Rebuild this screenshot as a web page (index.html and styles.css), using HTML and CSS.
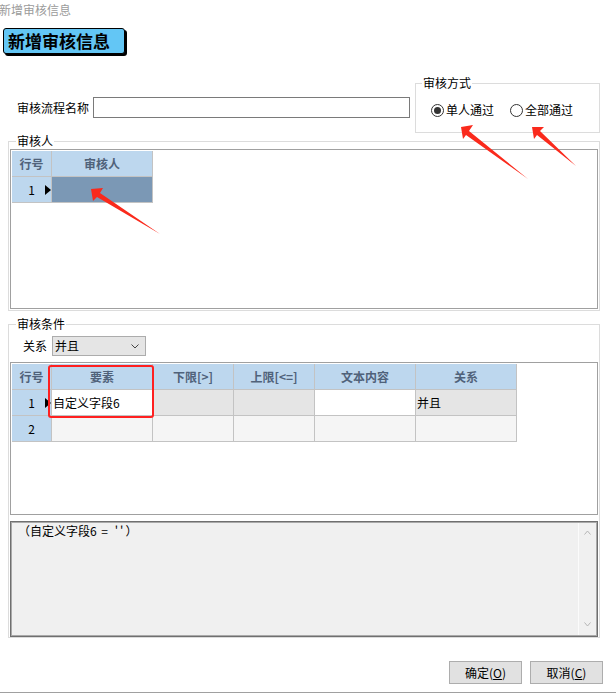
FILE: index.html
```html
<!DOCTYPE html>
<html lang="zh-CN">
<head>
    <meta charset="UTF-8">
    <title>新增审核信息</title>
    <link rel="stylesheet" href="styles.css">
</head>
<body>
    <div class="window">
        <div class="titlebar">新增审核信息</div>
        <div class="banner">新增审核信息</div>

        <div class="top-row">
            <div class="name-field">
                <label for="flowName">审核流程名称</label>
                <input type="text" id="flowName" class="text-input">
            </div>
            <fieldset class="group mode-group">
                <legend>审核方式</legend>
                <div class="radios">
                    <span class="radio"><i class="radio-dot checked"></i>单人通过</span>
                    <span class="radio"><i class="radio-dot"></i>全部通过</span>
                </div>
            </fieldset>
        </div>

        <fieldset class="group reviewer-group">
            <legend>审核人</legend>
            <div class="grid-box reviewer-grid">
                <div class="grid-row header">
                    <div class="cell rowhead">行号</div>
                    <div class="cell col-wide">审核人</div>
                </div>
                <div class="grid-row">
                    <div class="cell rowhead num"><span>1</span><i class="pointer"></i></div>
                    <div class="cell col-wide selected"></div>
                </div>
            </div>
        </fieldset>

        <fieldset class="group cond-group">
            <legend>审核条件</legend>
            <div class="cond-body">
                <div class="relation-row">
                    <label>关系</label>
                    <div class="dropdown">
                        <span>并且</span>
                        <svg width="8" height="5" viewBox="0 0 8 5"><polyline points="0.5,0.5 4,4 7.5,0.5" fill="none" stroke="#444" stroke-width="1"/></svg>
                    </div>
                </div>

                <div class="grid-box cond-grid">
                    <div class="grid-row header">
                        <div class="cell rowhead">行号</div>
                        <div class="cell col-wide">要素</div>
                        <div class="cell col-mid">下限[&gt;]</div>
                        <div class="cell col-mid">上限[&lt;=]</div>
                        <div class="cell col-wide">文本内容</div>
                        <div class="cell col-wide">关系</div>
                    </div>
                    <div class="grid-row">
                        <div class="cell rowhead num"><span>1</span><i class="pointer"></i></div>
                        <div class="cell col-wide value white">自定义字段6</div>
                        <div class="cell col-mid value"></div>
                        <div class="cell col-mid value"></div>
                        <div class="cell col-wide value white"></div>
                        <div class="cell col-wide value">并且</div>
                    </div>
                    <div class="grid-row">
                        <div class="cell rowhead num"><span>2</span></div>
                        <div class="cell col-wide value light"></div>
                        <div class="cell col-mid value light"></div>
                        <div class="cell col-mid value light"></div>
                        <div class="cell col-wide value light"></div>
                        <div class="cell col-wide value light"></div>
                    </div>
                    <div class="highlight"></div>
                </div>

                <div class="expr-box">
                    <div class="expr-text">（自定义字段6<span class="expr-op"> = ''</span>）</div>
                    <div class="scrollbar">
                        <svg width="7" height="5" viewBox="0 0 7 5"><polyline points="0.5,4.5 3.5,1 6.5,4.5" fill="none" stroke="#b5b5b5" stroke-width="1"/></svg>
                        <svg width="7" height="5" viewBox="0 0 7 5"><polyline points="0.5,0.5 3.5,4 6.5,0.5" fill="none" stroke="#b5b5b5" stroke-width="1"/></svg>
                    </div>
                </div>
            </div>
        </fieldset>

        <div class="buttons">
            <button>确定(<u>O</u>)</button>
            <button>取消(<u>C</u>)</button>
        </div>
        <div class="window-bottom"></div>

        <!-- annotation arrows -->
        <svg class="arrows" width="616" height="693" viewBox="0 0 616 693">
            <polygon points="91,189 103,188 100,193 160,234 97,197 93,201" fill="#fa2a1c"/>
            <polygon points="461,127 473,125 469,131 528,179 466,135 463,139" fill="#fa2a1c"/>
            <polygon points="532,127 544,127 540,131 576,166 537,135 534,139" fill="#fa2a1c"/>
        </svg>
    </div>
</body>
</html>
```

FILE: styles.css
```css
html, body {
    margin: 0;
    padding: 0;
    background-color: white;
    overflow: hidden;
}

.window {
    position: relative;
    width: 616px;
    height: 693px;
    font-family: 'Noto Sans CJK SC', 'Noto Sans', sans-serif;
    font-size: 12px;
    line-height: 14px;
    color: #000;
}

.titlebar {
    height: 20px;
    line-height: 20px;
    color: #9b9b9b;
    margin-left: -1px;
}

.banner {
    box-sizing: border-box;
    width: 122px;
    height: 26px;
    margin: 8px 0 0 3px;
    padding-left: 4px;
    background-color: #63c6f5;
    border: 1px solid #000;
    border-radius: 3px;
    box-shadow: 2px 2px 0 #000;
    font-size: 17px;
    font-weight: bold;
    line-height: 24px;
}

.top-row {
    display: flex;
    align-items: flex-start;
    margin-top: 22px;
}

.name-field {
    display: flex;
    align-items: center;
    margin: 21px 0 0 17px;
}

.name-field label {
    margin-right: 4px;
}

.text-input {
    box-sizing: border-box;
    width: 317px;
    height: 21px;
    border: 1px solid #7a7a7a;
    padding: 0 2px;
    margin: 0;
    outline: none;
}

/* group boxes */
.group {
    margin: 0;
    padding: 0;
    min-width: 0;
    border: 1px solid #dcdcdc;
}

.group legend {
    padding: 0 1px;
    margin-left: 6px;
    line-height: 14px;
}

.mode-group {
    box-sizing: border-box;
    width: 185px;
    height: 57px;
    margin-left: auto;
    margin-right: 16px;
}

.radios {
    display: flex;
    align-items: center;
    padding: 13px 0 0 15px;
}

.radio {
    display: flex;
    align-items: center;
    margin-right: 16px;
}

.radio-dot {
    box-sizing: border-box;
    width: 13px;
    height: 13px;
    margin-right: 2px;
    border: 1px solid #333;
    border-radius: 50%;
    background-color: white;
    display: flex;
    align-items: center;
    justify-content: center;
}

.radio-dot.checked::after {
    content: '';
    width: 7px;
    height: 7px;
    border-radius: 50%;
    background-color: #333;
}

.reviewer-group {
    width: 592px;
    box-sizing: border-box;
    margin: 1px 0 0 8px;
    padding: 1px 1px 1px 1px;
}

.cond-group {
    width: 592px;
    box-sizing: border-box;
    margin: 6px 0 0 8px;
    padding: 0 1px;
}

/* grids */
.grid-box {
    position: relative;
    box-sizing: border-box;
    border: 1px solid #a0a0a0;
    padding: 1px;
}

.reviewer-grid {
    height: 160px;
}

.cond-grid {
    height: 153px;
    margin-top: 6px;
}

.grid-row {
    display: flex;
}

.cell {
    box-sizing: border-box;
    height: 26px;
    line-height: 25px;
    border-right: 1px solid #c3c3c3;
    border-bottom: 1px solid #c3c3c3;
    background-color: #bdd7ee;
}

.header .cell {
    text-align: center;
    font-weight: bold;
    color: #50627a;
}

.rowhead {
    width: 40px;
}

.col-wide {
    width: 101px;
}

.col-mid {
    width: 81px;
}

.num {
    display: flex;
    align-items: center;
    justify-content: flex-end;
    padding-right: 16px;
}

.num span + .pointer {
    margin-left: 10px;
}

.num:has(.pointer) {
    padding-right: 0;
}

.pointer {
    width: 0;
    height: 0;
    border-left: 6px solid #000;
    border-top: 5px solid transparent;
    border-bottom: 5px solid transparent;
}

.selected {
    background-color: #7b98b5;
}

.value {
    background-color: #e5e5e5;
    padding-left: 1px;
}

.value.white {
    background-color: white;
}

.value.light {
    background-color: #f5f5f5;
}

.highlight {
    position: absolute;
    left: 37px;
    top: 2px;
    width: 106px;
    height: 53px;
    box-sizing: border-box;
    border: 2px solid #ff2020;
    border-radius: 3px;
}

.cond-body {
    padding-top: 5px;
}

.relation-row {
    display: flex;
    align-items: center;
    padding-left: 13px;
}

.relation-row label {
    margin-right: 5px;
}

.dropdown {
    box-sizing: border-box;
    width: 94px;
    height: 20px;
    display: flex;
    align-items: center;
    justify-content: space-between;
    padding: 0 6px 0 2px;
    background-color: #e5e5e5;
    border: 1px solid #acacac;
}

.expr-box {
    box-sizing: border-box;
    height: 116px;
    margin-top: 6px;
    display: flex;
    border: 1px solid #6f6f6f;
    box-shadow: inset 0 0 0 1px #a9a9a9;
    background-color: #f0f0f0;
}

.expr-text {
    flex: 1;
    padding: 1px 0 0 7px;
    line-height: 16px;
    white-space: pre;
}

.expr-op {
    letter-spacing: 2px;
}

.scrollbar {
    width: 17px;
    margin: 1px 1px 1px 0;
    border-left: 1px solid #fbfbfb;
    display: flex;
    flex-direction: column;
    justify-content: space-between;
    align-items: center;
    padding: 7px 0 8px;
}

.buttons {
    display: flex;
    justify-content: flex-end;
    gap: 8px;
    margin-top: 23px;
    padding-right: 13px;
}

button {
    box-sizing: border-box;
    width: 73px;
    height: 23px;
    padding: 0;
    background-color: #e1e1e1;
    border: 1px solid #adadad;
    font-family: inherit;
    font-size: 12px;
    color: #000;
}

.window-bottom {
    margin-top: 8px;
    border-top: 1px solid #a0a0a0;
}

.arrows {
    position: absolute;
    left: 0;
    top: 0;
    pointer-events: none;
}
```
